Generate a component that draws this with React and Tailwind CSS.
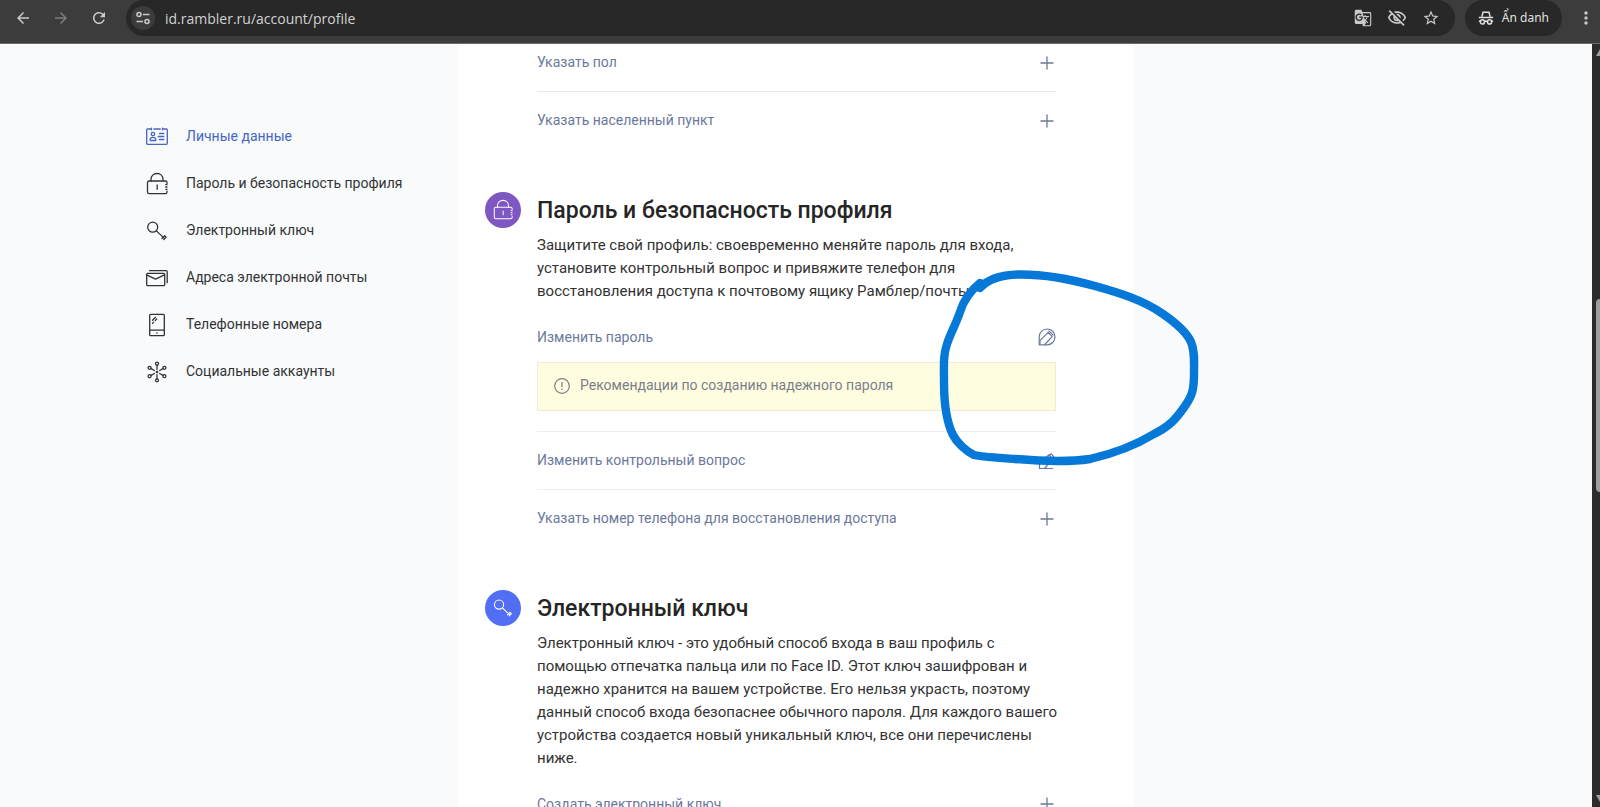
import React from "react";
import {
  MdArrowBack,
  MdArrowForward,
  MdRefresh,
  MdGTranslate,
  MdOutlineVisibilityOff,
  MdStarBorder,
  MdMoreVert,
} from "react-icons/md";

function Glyph({ size = 24, children, strokeWidth = 1.3 }) {
  return (
    <svg
      width={size}
      height={size}
      viewBox="0 0 24 24"
      fill="none"
      stroke="currentColor"
      strokeWidth={strokeWidth}
      strokeLinecap="round"
      strokeLinejoin="round"
      aria-hidden="true"
      className="shrink-0"
    >
      {children}
    </svg>
  );
}

const CardIcon = (props) => (
  <Glyph {...props}>
    <path d="M6.5 4H2.7a1 1 0 0 0-1 1v13.3a1 1 0 0 0 1 1h18.6a1 1 0 0 0 1-1V5a1 1 0 0 0-1-1h-3.8M9 4h6.2M6.500 3.200v1.600M17.500 3.200v1.600" />
    <circle cx="8" cy="9" r="1.700" />
    <path d="M5.200 15.500v-1.200c0-1.300 1-2 2.800-2s2.800.7 2.800 2v1.200zM14.500 8.500h4.300M13.200 11.500h5.600M14.500 14.500h4.300" />
  </Glyph>
);

const LockIcon = (props) => (
  <Glyph {...props}>
    <path d="M22 11.500V10.600A1.600 1.600 0 0 0 20.400 9H4.100A1.600 1.600 0 0 0 2.500 10.600V20a1.600 1.600 0 0 0 1.600 1.600H20.400A1.600 1.600 0 0 0 22 20v-.8M20.800 12.700H22M20.800 15H22M20.800 17.300H22" />
    <path d="M6 9V7.400C6 3.900 8.500 1.500 12 1.500s6 2.400 6 5.900V9M12.200 13v4.300" />
  </Glyph>
);

const KeyIcon = (props) => (
  <Glyph {...props}>
    <circle cx="7.700" cy="8.200" r="5" />
    <path d="M11.400 11.900l7.400 7M17 19.500l2.700-2.800 1.400 1.400-2.300 2.500" />
  </Glyph>
);

const MailIcon = (props) => (
  <Glyph {...props}>
    <path d="M2.600 7.300h16.100a1 1 0 0 1 1 1v10.400a1 1 0 0 1-1 1H2.700a1 1 0 0 1-1-1V8.200z" />
    <path d="M2 9.200l8.600 4 8.800-4.400M4.500 4.700h16.700a1 1 0 0 1 1 1v11" />
  </Glyph>
);

const PhoneIcon = (props) => (
  <Glyph {...props}>
    <rect x="4.700" y="1.300" width="14.600" height="21.400" rx="1" />
    <path d="M4.700 17.200h14.600M12 19.800v.5M7.500 7.300l3-3M7.500 10.300l1.200-1.200M10.200 7.600l1.600-1.600" />
  </Glyph>
);

const HubIcon = (props) => (
  <Glyph {...props}>
    <circle cx="12" cy="3.700" r="1.500" />
    <circle cx="12" cy="20.300" r="1.500" />
    <circle cx="4.600" cy="7.800" r="1.500" />
    <circle cx="19.400" cy="7.800" r="1.500" />
    <circle cx="4.600" cy="16.200" r="1.500" />
    <circle cx="19.400" cy="16.200" r="1.500" />
    <path d="M12 5.200v4.200M12 14.600v4.200M6 8.600l3.400 1.900M18 8.600l-3.400 1.900M6 15.400l3.400-1.900M18 15.400l-3.400-1.900" />
    <circle cx="12" cy="12" r=".7" />
  </Glyph>
);

const PlusIcon = () => (
  <svg width="18" height="18" viewBox="0 0 18 18" stroke="currentColor" strokeWidth="1.300" aria-hidden="true">
    <path d="M9 2.500v13M2.500 9h13" />
  </svg>
);

const EditIcon = () => (
  <svg
    width="18"
    height="18"
    viewBox="0 0 18 18"
    fill="none"
    stroke="currentColor"
    strokeWidth="1.200"
    strokeLinejoin="round"
    strokeLinecap="round"
    aria-hidden="true"
  >
    <path d="M1.500 16.500v-5.300L11 2.600l3.800 4.200L6.500 16.500z" />
    <path d="M1.500 16.500h13M10 4.200l3.300-2.400 2.400 2.800" />
  </svg>
);

const EditRoundIcon = () => (
  <svg
    width="18"
    height="18"
    viewBox="0 0 18 18"
    fill="none"
    stroke="currentColor"
    strokeWidth="1.200"
    strokeLinejoin="round"
    strokeLinecap="round"
    aria-hidden="true"
  >
    <path d="M1.200 16.800V9a7.900 7.900 0 1 1 7.900 7.800z" />
    <path d="M2 12.600l8.200-8.200 4 4.200-7.400 7.900M10.800 2.800l4.400 4.400M2 12.600v3.400" />
  </svg>
);

const TuneIcon = () => (
  <svg width="16" height="16" viewBox="0 0 16 16" fill="none" stroke="currentColor" strokeWidth="1.600" aria-hidden="true">
    <circle cx="4" cy="4.500" r="2" />
    <path d="M8 4.500h6.500M1.500 11.500H8" />
    <circle cx="12" cy="11.500" r="2" />
  </svg>
);

const IncognitoIcon = () => (
  <svg width="16" height="16" viewBox="0 0 18 18" fill="none" stroke="currentColor" strokeWidth="1.700" aria-hidden="true">
    <path d="M4.400 7.400L5.600 2.600h6.800l1.200 4.800M1 8.400h16" />
    <circle cx="5" cy="13.400" r="2.300" />
    <circle cx="13" cy="13.400" r="2.300" />
    <path d="M7.300 13.200c1-.8 2.400-.8 3.400 0M1 12.700h1.700M15.300 12.700H17" />
  </svg>
);

const NAV = [
  { label: "Личные данные", Icon: CardIcon, active: true },
  { label: "Пароль и безопасность профиля", Icon: LockIcon },
  { label: "Электронный ключ", Icon: KeyIcon },
  { label: "Адреса электронной почты", Icon: MailIcon },
  { label: "Телефонные номера", Icon: PhoneIcon },
  { label: "Социальные аккаунты", Icon: HubIcon },
];

function BrowserBar() {
  return (
    <header className="flex h-[44px] shrink-0 items-start border-b border-[#6b6b6b] bg-[#3c3c3c] text-[#c9c9c9]">
      <div className="flex h-9 w-[126px] shrink-0 items-center gap-5 pl-[14px]">
        <button type="button" aria-label="Назад"><MdArrowBack size={18} /></button>
        <button type="button" aria-label="Вперёд" className="text-[#7d7d7d]"><MdArrowForward size={18} /></button>
        <button type="button" aria-label="Обновить"><MdRefresh size={18} /></button>
      </div>
      <div className="flex h-9 flex-1 items-center rounded-full bg-[#282828] pl-[5px] pr-[15px]">
        <button type="button" aria-label="Сведения о сайте" className="flex size-6 items-center justify-center rounded-full bg-[#3c3c3c]">
          <TuneIcon />
        </button>
        <input
          type="text"
          aria-label="Адрес"
          defaultValue="id.rambler.ru/account/profile"
          className="ml-2.5 flex-1 bg-transparent font-['Open_Sans',sans-serif] text-[14px] text-[#d2d2d2] outline-none"
        />
        <div className="flex items-center gap-[15px]">
          <button type="button" aria-label="Перевести"><MdGTranslate size={18} /></button>
          <button type="button" aria-label="Файлы cookie"><MdOutlineVisibilityOff size={20} /></button>
          <button type="button" aria-label="В закладки"><MdStarBorder size={18} /></button>
        </div>
      </div>
      <button type="button" className="ml-2.5 flex h-9 items-center gap-2 rounded-full bg-[#282828] px-[13px] font-['Noto_Sans',sans-serif] text-[12px] text-[#e0e0e0]">
        <IncognitoIcon />
        Ẩn danh
      </button>
      <button type="button" aria-label="Меню" className="ml-3.5 mr-1 flex h-9 items-center"><MdMoreVert size={20} /></button>
    </header>
  );
}

function Row({ label, children, className = "h-[57px]" }) {
  return (
    <button type="button" className={`flex w-full items-center justify-between text-left text-[14px] text-[#6b789c] ${className}`}>
      <span>{label}</span>
      {children || <PlusIcon />}
    </button>
  );
}

function Section({ title, badge, text, children }) {
  return (
    <section className="mt-[43px] flex gap-4">
      <div className="shrink-0">{badge}</div>
      <div className="flex-1">
        <h2 className="text-[23px] leading-[38px] font-medium text-[#252525]">{title}</h2>
        <p className="mt-1 -mr-1 text-[15px] leading-[23px] text-[#333333]">{text}</p>
        <div className="mt-[9px]">{children}</div>
      </div>
    </section>
  );
}

export default function App() {
  return (
    <div className="flex h-screen flex-col overflow-hidden bg-[#f8fafc] font-['Roboto',sans-serif]">
      <BrowserBar />
      <div className="flex min-h-0 flex-1">
        <div className="grid min-w-0 flex-1 grid-cols-[1fr_676px_1fr] overflow-hidden">
          <aside className="flex justify-end">
            <nav className="flex w-[313px] flex-col pt-[69px]">
              {NAV.map(({ label, Icon, active }) => (
                <a
                  key={label}
                  href="#"
                  className={`flex h-[47px] items-center gap-[17px] text-[14px] ${active ? "text-[#4665c4]" : "text-[#333333]"}`}
                >
                  <Icon />
                  {label}
                </a>
              ))}
            </nav>
          </aside>

          <main className="relative bg-white">
            <div className="-mt-2.5 pr-[78px] pl-[27px]">
              <div className="divide-y divide-[#e9e9ec] pl-[52px]">
                <Row label="Указать пол" className="h-[58px]" />
                <Row label="Указать населенный пункт" />
              </div>

              <Section
                title="Пароль и безопасность профиля"
                text="Защитите свой профиль: своевременно меняйте пароль для входа, установите контрольный вопрос и привяжите телефон для восстановления доступа к почтовому ящику Рамблер/почты."
                badge={
                  <div className="flex size-9 items-center justify-center rounded-full bg-[#7e57c2] text-white">
                    <LockIcon size={22} strokeWidth={1.1} />
                  </div>
                }
              >
                <div className="divide-y divide-[#ededf0]">
                  <div className="pb-5">
                    <Row label="Изменить пароль" className="h-[50px]">
                      <EditRoundIcon />
                    </Row>
                    <a href="#" className="flex h-[49px] items-center gap-2.5 border border-[#ececd8] bg-[#fffde0] px-4 pb-0.5 text-[14px] text-[#7a7f8c]">
                      <svg width="16" height="16" viewBox="0 0 16 16" fill="none" stroke="currentColor" strokeWidth="1.200" aria-hidden="true">
                        <circle cx="8" cy="8" r="7.300" />
                        <path d="M8 4v5M8 10.500v1.500" />
                      </svg>
                      Рекомендации по созданию надежного пароля
                    </a>
                  </div>
                  <Row label="Изменить контрольный вопрос" className="h-[58px]">
                    <EditIcon />
                  </Row>
                  <Row label="Указать номер телефона для восстановления доступа" />
                </div>
              </Section>

              <Section
                title="Электронный ключ"
                text="Электронный ключ - это удобный способ входа в ваш профиль с помощью отпечатка пальца или по Face ID. Этот ключ зашифрован и надежно хранится на вашем устройстве. Его нельзя украсть, поэтому данный способ входа безопаснее обычного пароля. Для каждого вашего устройства создается новый уникальный ключ, все они перечислены ниже."
                badge={
                  <div className="flex size-9 items-center justify-center rounded-full bg-[#526ef5] text-white">
                    <KeyIcon size={22} strokeWidth={1.2} />
                  </div>
                }
              >
                <Row label="Создать электронный ключ" className="h-[50px]" />
              </Section>
            </div>

            <svg
              className="pointer-events-none absolute top-[216px] left-[472px]"
              width="280"
              height="210"
              viewBox="930 260 280 210"
              fill="none"
              stroke="#0678d8"
              strokeWidth="8.400"
              strokeLinecap="round"
              strokeLinejoin="round"
              aria-hidden="true"
            >
              <path d="M980 288C988 279 1000 275 1018 274.500C1045 274 1070 279 1095 286C1120 293 1143 300 1163 314C1176 323 1187 333 1191 342C1195 351 1194 362 1194 374C1194 390 1192 396 1185 406C1176 419 1170 426 1154 434C1134 446 1112 454 1090 459C1070 462 1040 461 1015 459C1000 458 984 457 974 455C966 451 957 443 953 435C946 421 944 402 944 382C944 365 943 356 947 344C951 332 956 324 960 312C964 299 970 291 980 283L982 284" />
            </svg>
          </main>
        </div>

        <div className="flex w-2 shrink-0 flex-col justify-between bg-[#2c2c2c] pl-1" aria-hidden="true">
          <svg width="4" height="12" viewBox="0 0 4 12" fill="#a0a0a0"><path d="M0 12L4 5v7z" /></svg>
          <div className="mb-15 h-[193px] rounded-l bg-[#9f9f9f]" />
          <svg width="4" height="12" viewBox="0 0 4 12" fill="#a0a0a0"><path d="M0 0h4v7z" /></svg>
        </div>
      </div>
    </div>
  );
}
